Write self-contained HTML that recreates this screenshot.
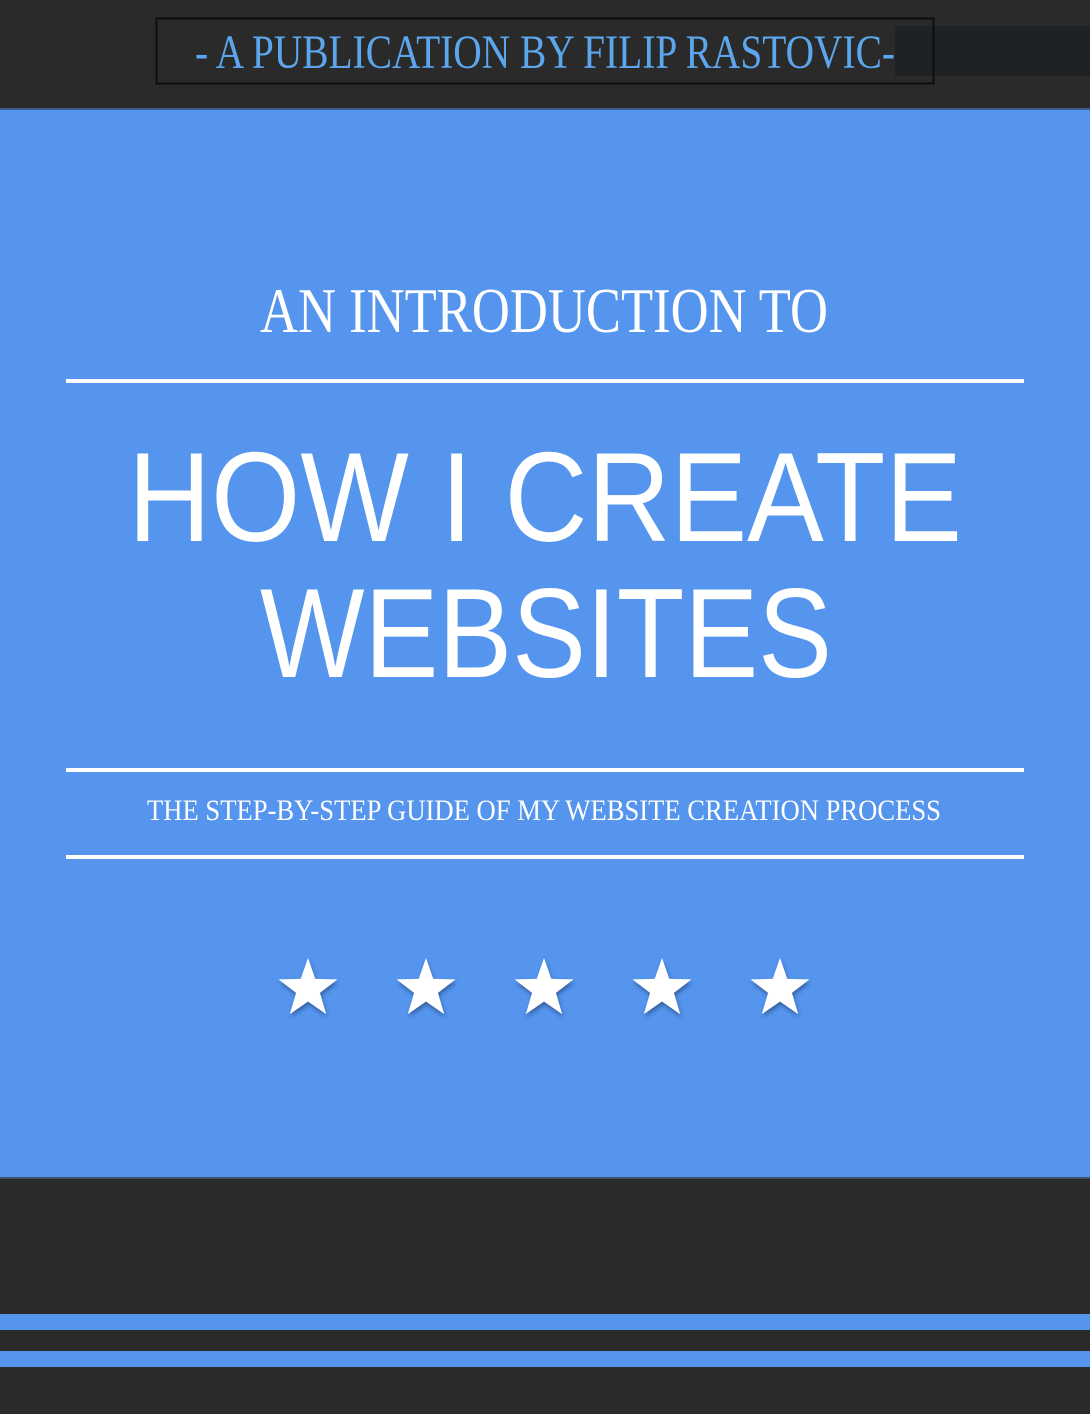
<!DOCTYPE html>
<html><head><meta charset="utf-8"><style>
html,body{margin:0;padding:0;background:#2a2a2a;}
svg{display:block}
</style></head><body>
<svg width="1090" height="1414" viewBox="0 0 1090 1414" xmlns="http://www.w3.org/2000/svg">
<defs>
<filter id="sh" x="-30%" y="-30%" width="160%" height="160%">
<feDropShadow dx="1" dy="3" stdDeviation="2" flood-color="#1a3a70" flood-opacity="0.6"/>
</filter>
<path id="st" d="M0,-31 L7.3,-10.1 L29.5,-9.6 L11.9,3.9 L18.2,25.1 L0,12.5 L-18.2,25.1 L-11.9,3.9 L-29.5,-9.6 L-7.3,-10.1 Z" fill="#fff"/>
</defs>
<rect width="1090" height="1414" fill="#2a2a2a"/>
<rect x="895" y="26" width="195" height="50" fill="#1f2225"/>
<rect x="156.5" y="18.5" width="777" height="65" fill="none" stroke="#0e0e0e" stroke-width="2"/>
<text x="195" y="68" textLength="700" lengthAdjust="spacingAndGlyphs" font-family="Liberation Serif, serif" font-size="48" fill="#5ba6ec">- A PUBLICATION BY FILIP RASTOVIC-</text>
<rect y="108" width="1090" height="2" fill="#3c5a88"/>
<rect y="110" width="1090" height="1067" fill="#5595ee"/>
<rect y="1177" width="1090" height="2" fill="#3d5270"/>
<text x="260" y="332" textLength="568" lengthAdjust="spacingAndGlyphs" font-family="Liberation Serif, serif" font-size="63" fill="#fff">AN INTRODUCTION TO</text>
<rect x="66" y="379" width="958" height="4" fill="#fff"/>
<text x="128" y="541" textLength="834" lengthAdjust="spacingAndGlyphs" font-family="Liberation Sans, sans-serif" font-size="127" fill="#fff">HOW I CREATE</text>
<text x="260" y="677" textLength="572" lengthAdjust="spacingAndGlyphs" font-family="Liberation Sans, sans-serif" font-size="127" fill="#fff">WEBSITES</text>
<rect x="66" y="768" width="958" height="4" fill="#fff"/>
<text x="147" y="820" textLength="794" lengthAdjust="spacingAndGlyphs" font-family="Liberation Serif, serif" font-size="30" fill="#fff">THE STEP-BY-STEP GUIDE OF MY WEBSITE CREATION PROCESS</text>
<rect x="66" y="855" width="958" height="4" fill="#fff"/>
<g filter="url(#sh)">
<use href="#st" x="308" y="989"/>
<use href="#st" x="426" y="989"/>
<use href="#st" x="544" y="989"/>
<use href="#st" x="662" y="989"/>
<use href="#st" x="780" y="989"/>
</g>
<rect y="1314" width="1090" height="16" fill="#5595ee"/>
<rect y="1351" width="1090" height="16" fill="#5595ee"/>
</svg>
</body></html>
